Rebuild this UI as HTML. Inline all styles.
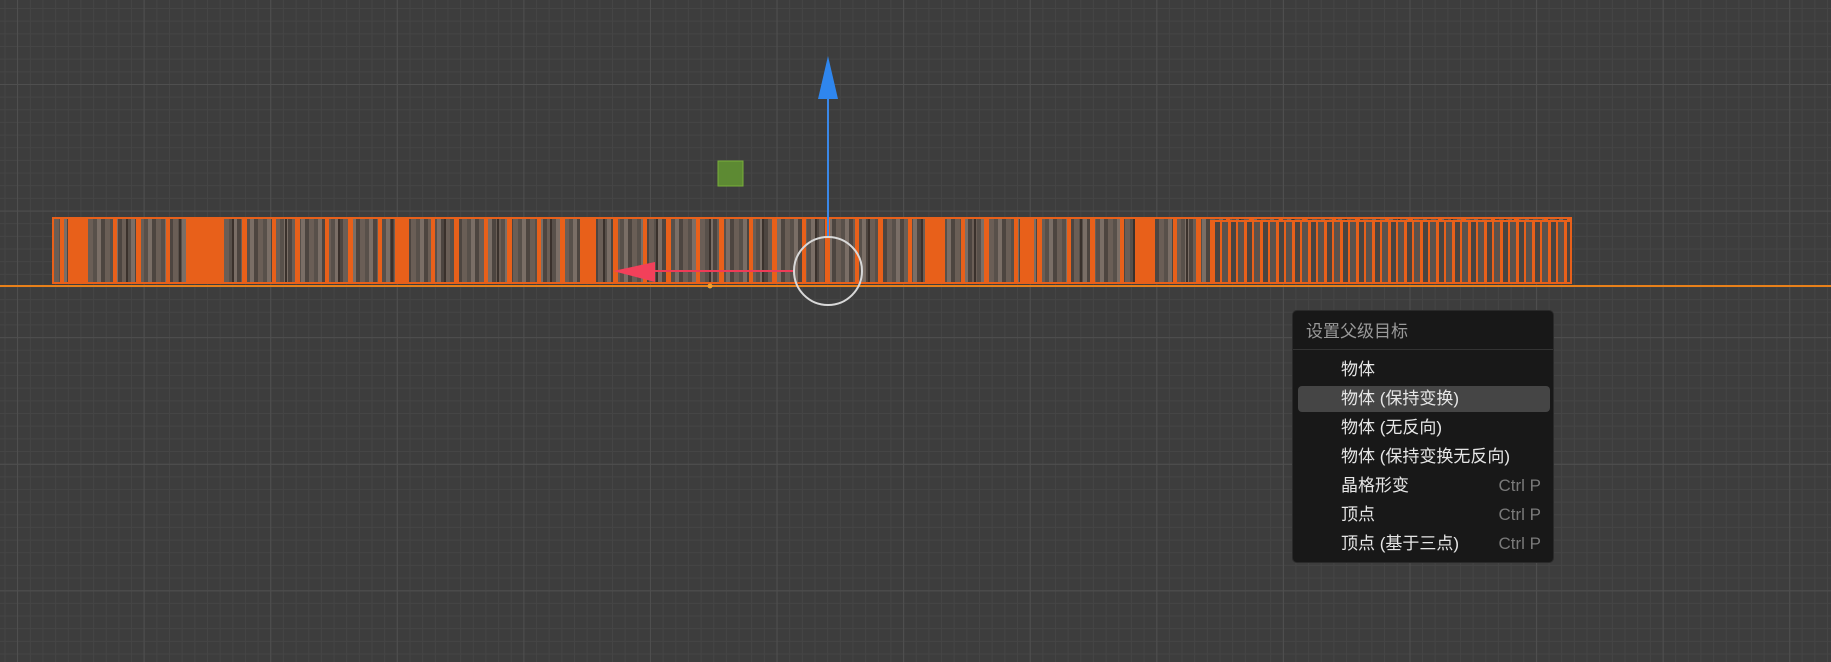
<!DOCTYPE html>
<html><head><meta charset="utf-8"><style>
html,body{margin:0;padding:0}
body{width:1831px;height:662px;overflow:hidden;position:relative;background:#3d3d3d;font-family:"Liberation Sans","Noto Sans CJK SC",sans-serif}
.grid{position:absolute;inset:0;
background-image:
linear-gradient(90deg,#4f4f4f 1px,transparent 1px),
linear-gradient(0deg,#4f4f4f 1px,transparent 1px),
linear-gradient(90deg,#454545 1px,transparent 1px),
linear-gradient(0deg,#454545 1px,transparent 1px);
background-size:126.6px 126.6px,126.6px 126.6px,12.66px 12.66px,12.66px 12.66px;
background-position:17px 0,0 85px,4.5px 0,0 9px}
.band{position:absolute;left:52px;top:217px;width:1520px;height:67px;border:2px solid #e8601a;box-sizing:border-box;
background:
repeating-linear-gradient(90deg,transparent 0 6px,#e8601a 6px 10px,transparent 10px 19px,#3a312c 19px 21px,transparent 21px 29px,#e8601a 29px 34px,transparent 34px 53px),
repeating-linear-gradient(90deg,#6a5e56 0 5px,#58504a 5px 9px,#7a6e66 9px 13px,#4d4540 13px 17px);}
.blk{position:absolute;top:219px;height:63px;background:#e8601a}
.band2{position:absolute;left:1210px;top:220px;width:362px;height:64px;border:2px solid #e8601a;box-sizing:border-box;
background:repeating-linear-gradient(90deg,#e8601a 0 3px,#4a4440 3px 8px,#e8601a 8px 10px,#5b524c 10px 16px)}
.horizon{position:absolute;left:0;top:285px;width:1831px;height:2px;background:#e8801a}
.menu{position:absolute;left:1292px;top:310px;width:262px;height:253px;background:#181818;border:1px solid #2a2a2a;border-radius:5px;box-sizing:border-box;color:#e6e6e6;font-size:17px}
.title{position:absolute;left:13px;top:6px;color:#9a9a9a}
.sep{position:absolute;left:0;right:0;top:38px;height:1px;background:#333}
.row{position:absolute;left:48px;height:29px;line-height:29px;width:200px}
.row span{position:absolute;right:0;color:#7a7a7a}
.hl{position:absolute;left:5px;top:75px;width:252px;height:26px;background:#454545;border-radius:4px}
</style></head><body>
<div class="grid"></div>
<div class="band"></div>
<div class="blk" style="left:68px;width:20px"></div>
<div class="blk" style="left:186px;width:38px"></div>
<div class="blk" style="left:395px;width:14px"></div>
<div class="blk" style="left:580px;width:16px"></div>
<div class="blk" style="left:925px;width:20px"></div>
<div class="blk" style="left:1020px;width:14px"></div>
<div class="blk" style="left:1135px;width:20px"></div>
<div class="band2"></div>
<div class="horizon"></div>
<svg width="1831" height="662" style="position:absolute;left:0;top:0">
<rect x="718" y="161" width="25" height="25" fill="#5d8a33" stroke="#79b03a" stroke-width="1"/>
<line x1="828" y1="95" x2="828" y2="237" stroke="#3a88e8" stroke-width="2"/>
<polygon points="828,56 818,99 838,99" fill="#2f86ee"/>
<line x1="650" y1="271" x2="793" y2="271" stroke="#ee3b56" stroke-width="2"/>
<polygon points="613,271 655,262 655,282" fill="#f2405a"/>
<circle cx="828" cy="271" r="34" fill="none" stroke="#d8d8d8" stroke-width="2"/>
<circle cx="710" cy="286" r="2.5" fill="#f0a030"/>
</svg>
<div class="menu">
<div class="title">设置父级目标</div>
<div class="sep"></div>
<div class="hl"></div>
<div class="row" style="top:44px">物体</div>
<div class="row" style="top:73px">物体 (保持变换)</div>
<div class="row" style="top:102px">物体 (无反向)</div>
<div class="row" style="top:131px">物体 (保持变换无反向)</div>
<div class="row" style="top:160px">晶格形变<span>Ctrl P</span></div>
<div class="row" style="top:189px">顶点<span>Ctrl P</span></div>
<div class="row" style="top:218px">顶点 (基于三点)<span>Ctrl P</span></div>
</div>
</body></html>
